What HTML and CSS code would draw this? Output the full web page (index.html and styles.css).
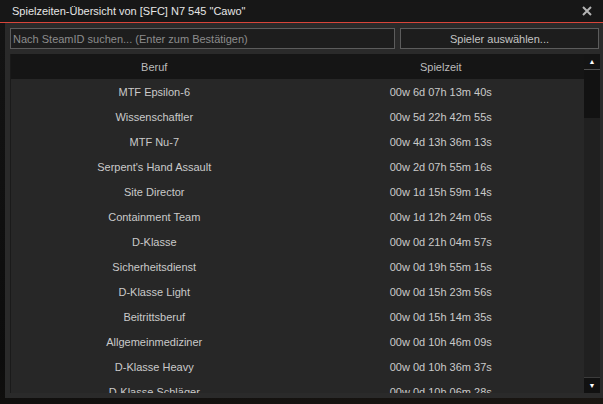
FILE: index.html
```html
<!DOCTYPE html>
<html lang="de">
<head>
    <meta charset="UTF-8">
    <title>Spielzeiten-Übersicht</title>
    <link rel="stylesheet" href="styles.css">
</head>
<body>
    <div class="frame">
        <div class="titlebar">
            <span class="title">Spielzeiten-Übersicht von [SFC] N7 545 "Cawo"</span>
            <svg class="close" width="10" height="10" viewBox="0 0 10 10">
                <path d="M1 1 L9 9 M9 1 L1 9" stroke="#b4b4b4" stroke-width="2"/>
            </svg>
        </div>

        <div class="toolbar">
            <input type="text" class="search" placeholder="Nach SteamID suchen... (Enter zum Bestätigen)">
            <button class="pick">Spieler auswählen...</button>
        </div>

        <div class="list">
            <div class="rows">
                <div class="row head"><span>Beruf</span><span>Spielzeit</span></div>
                <div class="row"><span>MTF Epsilon-6</span><span>00w 6d 07h 13m 40s</span></div>
                <div class="row"><span>Wissenschaftler</span><span>00w 5d 22h 42m 55s</span></div>
                <div class="row"><span>MTF Nu-7</span><span>00w 4d 13h 36m 13s</span></div>
                <div class="row"><span>Serpent's Hand Assault</span><span>00w 2d 07h 55m 16s</span></div>
                <div class="row"><span>Site Director</span><span>00w 1d 15h 59m 14s</span></div>
                <div class="row"><span>Containment Team</span><span>00w 1d 12h 24m 05s</span></div>
                <div class="row"><span>D-Klasse</span><span>00w 0d 21h 04m 57s</span></div>
                <div class="row"><span>Sicherheitsdienst</span><span>00w 0d 19h 55m 15s</span></div>
                <div class="row"><span>D-Klasse Light</span><span>00w 0d 15h 23m 56s</span></div>
                <div class="row"><span>Beitrittsberuf</span><span>00w 0d 15h 14m 35s</span></div>
                <div class="row"><span>Allgemeinmediziner</span><span>00w 0d 10h 46m 09s</span></div>
                <div class="row"><span>D-Klasse Heavy</span><span>00w 0d 10h 36m 37s</span></div>
                <div class="row"><span>D-Klasse Schläger</span><span>00w 0d 10h 06m 28s</span></div>
            </div>
            <div class="scrollbar">
                <div class="arrow up">&#9650;</div>
                <div class="thumb"></div>
                <div class="track"></div>
                <div class="arrow down">&#9660;</div>
            </div>
        </div>
    </div>
</body>
</html>
```

FILE: styles.css
```css
html, body {
    margin: 0;
    height: 100%;
    overflow: hidden;
}
body {
    background: linear-gradient(170deg, #141414 0%, #0c0c0c 70%, #1a1612 100%);
    font-family: "Liberation Sans", Arial, sans-serif;
    font-size: 11px;
    color: #cacaca;
}
.frame {
    margin-left: 5px;
    width: 598px;
    height: 398px;
    background-color: #2a2a2a;
    display: flex;
    flex-direction: column;
}
.titlebar {
    height: 22px;
    background-color: #171717;
    border-bottom: 1px solid #d8453a;
    display: flex;
    align-items: center;
    justify-content: space-between;
    padding: 0 11px 0 12px;
    margin-left: -5px;
}
.title {
    color: #e6e6e6;
    font-size: 11px;
}
.close {
    display: block;
}
.toolbar {
    display: flex;
    gap: 5px;
    padding: 5px 4px 0 5px;
    height: 21px;
}
.search, .pick {
    box-sizing: border-box;
    height: 21px;
    margin: 0;
    background-color: #1d1d1d;
    border: 1px solid #5c5c5c;
    font-family: inherit;
    font-size: 11px;
    outline: none;
}
.search {
    width: 385px;
    padding: 0 2px;
    color: #cfcfcf;
}
.search::placeholder {
    color: #8c8c8c;
}
.pick {
    flex: 1;
    color: #c4c4c4;
    cursor: pointer;
    padding: 0;
}
.list {
    margin: 5px 3px 0 5px;
    height: 339px;
    display: flex;
    border-left: 1px solid #1a1a1a;
    overflow: hidden;
}
.rows {
    flex: 1;
    background-color: #272727;
}
.row {
    display: grid;
    grid-template-columns: 1fr 1fr;
    height: 25px;
    align-items: center;
    text-align: center;
}
.row.head {
    background-color: #151515;
    color: #bcbcbc;
}
.scrollbar {
    width: 16px;
    display: flex;
    flex-direction: column;
    background-color: #202020;
}
.arrow {
    height: 15px;
    background-color: #141414;
    color: #ffffff;
    font-size: 7px;
    line-height: 15px;
    text-align: center;
}
.arrow.up {
    border-bottom: 1px solid #505050;
}
.arrow.down {
    border-top: 1px solid #3c3c3c;
    background-color: #111111;
}
.thumb {
    height: 48px;
    background-color: #121212;
}
.track {
    flex: 1;
}
```
